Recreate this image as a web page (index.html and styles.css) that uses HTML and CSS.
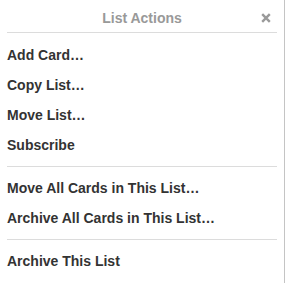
FILE: index.html
```html
<!DOCTYPE html>
<html>
<head>
<meta charset="utf-8">
<link rel="stylesheet" href="styles.css">
</head>
<body>
<div class="pop">
  <div class="pop-header">
    <span class="pop-title">List Actions</span>
    <span class="pop-close"><svg width="10" height="10" viewBox="0 0 10 10"><path d="M1.2 1.2 L8.8 8.8 M8.8 1.2 L1.2 8.8" stroke="#9a9a9a" stroke-width="2.4" stroke-linecap="butt"/></svg></span>
  </div>
  <ul class="menu first">
    <li class="item">Add Card…</li>
    <li class="item">Copy List…</li>
    <li class="item">Move List…</li>
    <li class="item">Subscribe</li>
  </ul>
  <hr class="sep">
  <ul class="menu">
    <li class="item">Move All Cards in This List…</li>
    <li class="item">Archive All Cards in This List…</li>
  </ul>
  <hr class="sep">
  <ul class="menu">
    <li class="item">Archive This List</li>
  </ul>
</div>
</body>
</html>
```
FILE: styles.css
```css
html, body {
  margin: 0;
  padding: 0;
  background: #fff;
}
body {
  font-family: "Liberation Sans", Arial, sans-serif;
  font-size: 14px;
  font-weight: bold;
}
.pop {
  width: 284px;
  height: 283px;
  border-right: 1px solid #c4c4c4;
  box-sizing: content-box;
}
.pop-header {
  position: relative;
  height: 32px;
  margin: 0 7px;
  border-bottom: 1px solid #dcdcdc;
  box-sizing: content-box;
  display: flex;
  justify-content: center;
}
.pop-title {
  padding-top: 8px;
  line-height: 20px;
  color: #999;
}
.pop-close {
  position: absolute;
  right: 6px;
  top: 13px;
  width: 10px;
  height: 10px;
  display: block;
}
.pop-close svg {
  display: block;
}
.menu {
  list-style: none;
  margin: 0;
  padding: 0;
}
.menu.first {
  padding-top: 7px;
}
.item {
  padding: 5px 7px;
  line-height: 20px;
  color: #333;
}
.sep {
  margin: 6px 7px;
  border: 0;
  border-top: 1px solid #dcdcdc;
  height: 0;
}
```
